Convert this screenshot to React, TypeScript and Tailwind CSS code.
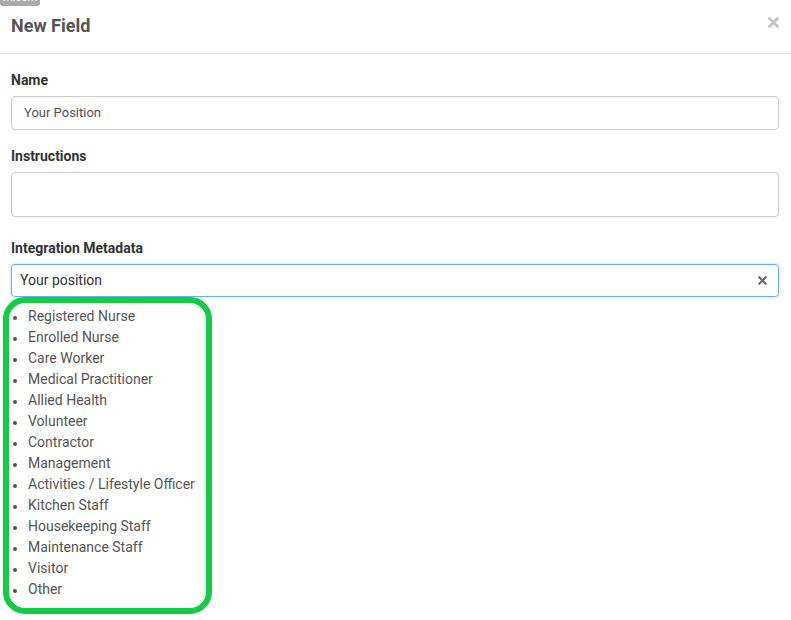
import React from "react";

const items = [
  "Registered Nurse",
  "Enrolled Nurse",
  "Care Worker",
  "Medical Practitioner",
  "Allied Health",
  "Volunteer",
  "Contractor",
  "Management",
  "Activities / Lifestyle Officer",
  "Kitchen Staff",
  "Housekeeping Staff",
  "Maintenance Staff",
  "Visitor",
  "Other",
];

function XIcon({ size, color, stroke }: { size: number; color: string; stroke: number }) {
  return (
    <svg width={size} height={size} viewBox="0 0 10 10">
      <path d="M1.5 1.5 L8.5 8.5 M8.5 1.5 L1.5 8.5" stroke={color} strokeWidth={stroke} strokeLinecap="square" />
    </svg>
  );
}

export default function App() {
  return (
    <div
      className="relative w-[791px] h-[620px] bg-white overflow-hidden"
      style={{ fontFamily: "Roboto, 'Liberation Sans', sans-serif" }}
    >
      <div className="absolute left-0 top-[-14px] w-[40px] h-[20px] bg-[#a9a9a9] rounded-b-[3px] flex items-end justify-center pb-[2px]">
        <span className="text-white text-[11px] leading-[12px]">m.com</span>
      </div>

      <div className="h-[54px] border-b border-[#e5e5e5] pt-[16px] pl-[11px] pr-[12px] flex justify-between items-start">
        <h1 className="text-[18px] leading-[20px] font-bold text-[#555]">New Field</h1>
        <div className="mt-[1px]">
          <XIcon size={11} color="#c4c4c4" stroke={2.6} />
        </div>
      </div>

      <div className="pl-[11px] pr-[12px] flex flex-col">
        <label className="mt-[18px] text-[14px] leading-[16px] font-bold text-[#333]">Name</label>
        <div className="mt-[8px] h-[34px] border border-[#ccc] rounded-[4px] flex items-center pl-[12px] text-[13px] text-[#555]">
          Your Position
        </div>

        <label className="mt-[18px] text-[14px] leading-[16px] font-bold text-[#333]">Instructions</label>
        <div className="mt-[8px] h-[45px] border border-[#ccc] rounded-[4px]" />

        <label className="mt-[23px] text-[14px] leading-[16px] font-bold text-[#333]">Integration Metadata</label>
        <div className="mt-[8px] h-[33px] border border-[#66afe9] rounded-[4px] shadow-[0_0_3px_rgba(102,175,233,0.5)] flex items-center justify-between pl-[8px] pr-[11px] text-[14px] text-[#333]">
          <span>Your position</span>
          <XIcon size={9} color="#6a6a6a" stroke={2.4} />
        </div>

        <div className="ml-[-8px] w-[209px] h-[317px] border-[6px] border-[#11cc44] rounded-[22px] pt-[3px] pl-[4px]">
          <ul className="flex flex-col">
            {items.map((it) => (
              <li key={it} className="h-[21px] flex items-center text-[14px] leading-[21px] text-[#555]">
                <span className="w-[4px] h-[4px] rounded-full bg-[#555] mt-[2px] mr-[11px] shrink-0" />
                <span>{it}</span>
              </li>
            ))}
          </ul>
        </div>
      </div>
    </div>
  );
}
